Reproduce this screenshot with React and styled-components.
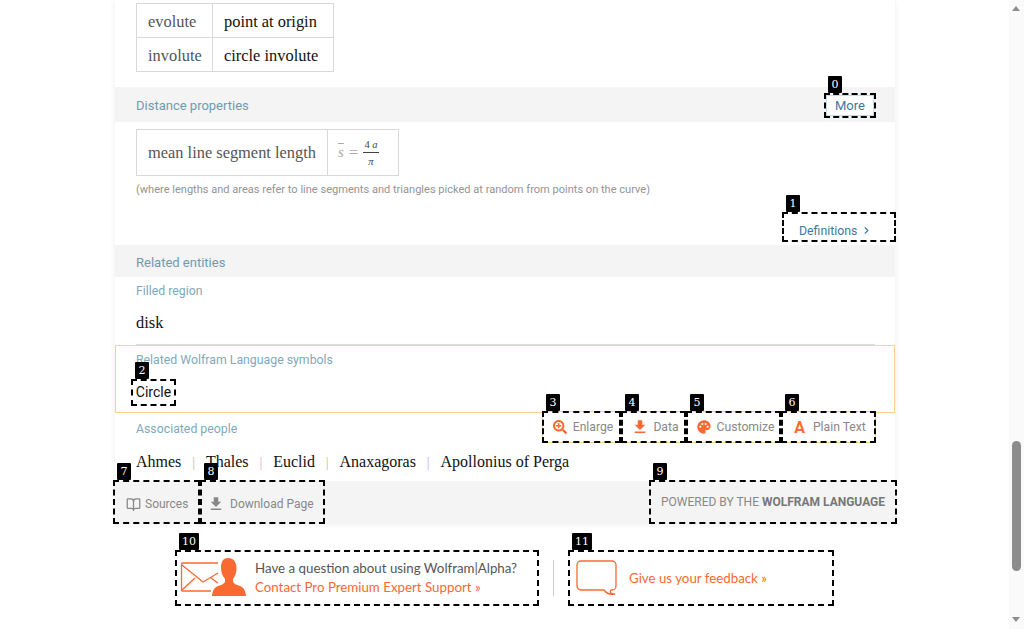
import styled, { createGlobalStyle } from "styled-components";
import { MdFileDownload, MdPalette } from "react-icons/md";
import { FaSearchPlus } from "react-icons/fa";
import { LuBookOpen, LuChevronRight } from "react-icons/lu";

const ORANGE = "#f96932";
const LABEL = "#7fa9bb";
const HEADING = "#6f9bb0";
const LINK = "#3c7a9c";

const people = ["Ahmes", "Thales", "Euclid", "Anaxagoras", "Apollonius of Perga"];

function Marked({ n, children, ...rest }) {
  return (
    <MarkedBox {...rest}>
      <Badge>{n}</Badge>
      {children}
    </MarkedBox>
  );
}

function App() {
  const tools = [
    { n: 3, label: "Enlarge", w: 79, gap: 6, icon: <FaSearchPlus size={14} /> },
    { n: 4, label: "Data", w: 65, gap: 4, icon: <MdFileDownload size={18} /> },
    { n: 5, label: "Customize", w: 95, gap: 5, icon: <MdPalette size={16} /> },
    { n: 6, label: "Plain Text", w: 95, gap: 8, icon: <LetterIcon>A</LetterIcon> },
  ];

  return (
    <>
      <GlobalStyle />
      <Page>
        <Card>
          <TableBlock>
            <DataTable>
              <tbody>
                <tr>
                  <KeyCell>evolute</KeyCell>
                  <ValueCell>point at origin</ValueCell>
                </tr>
                <tr>
                  <KeyCell>involute</KeyCell>
                  <ValueCell>circle involute</ValueCell>
                </tr>
              </tbody>
            </DataTable>
          </TableBlock>

          <SectionHeader>
            <span>Distance properties</span>
            <Marked n={0}>
              <MoreButton>More</MoreButton>
            </Marked>
          </SectionHeader>

          <FormulaBlock>
            <FormulaTable>
              <tbody>
                <tr>
                  <FormulaKey>mean line segment length</FormulaKey>
                  <FormulaValue>
                    <Formula>
                      <SBar>s</SBar>
                      <Equals>=</Equals>
                      <Fraction>
                        <Numerator>
                          4 <i>a</i>
                        </Numerator>
                        <Denominator>π</Denominator>
                      </Fraction>
                    </Formula>
                  </FormulaValue>
                </tr>
              </tbody>
            </FormulaTable>
            <Note>
              (where lengths and areas refer to line segments and triangles picked at random from
              points on the curve)
            </Note>
          </FormulaBlock>

          <DefinitionsRow>
            <DefinitionsBox n={1}>
              Definitions
              <LuChevronRight size={11} strokeWidth={2.5} />
            </DefinitionsBox>
          </DefinitionsRow>

          <SectionHeader $short>
            <span>Related entities</span>
          </SectionHeader>

          <SubSection>
            <SubLabel>Filled region</SubLabel>
            <SerifLine>disk</SerifLine>
          </SubSection>
          <Rule />

          <Highlight>
            <SubLabel>Related Wolfram Language symbols</SubLabel>
            <SymbolBox n={2}>Circle</SymbolBox>
          </Highlight>

          <Toolbar>
            {tools.map((tool) => (
              <ToolButton n={tool.n} key={tool.n} $w={tool.w} $gap={tool.gap}>
                <ToolIcon>{tool.icon}</ToolIcon>
                {tool.label}
              </ToolButton>
            ))}
          </Toolbar>

          <PeopleSection>
            <SubLabel>Associated people</SubLabel>
            <PeopleRow>
              {people.map((name, i) => (
                <Person key={name} $first={i === 0}>
                  {name}
                </Person>
              ))}
            </PeopleRow>
          </PeopleSection>

          <CardFooter>
            <FooterLeft>
              <FooterLink n={7} $w={87} $pad={11} $gap={4}>
                <LuBookOpen size={15} />
                Sources
              </FooterLink>
              <FooterLink n={8} $w={125} $pad={5} $gap={5}>
                <MdFileDownload size={18} />
                Download Page
              </FooterLink>
            </FooterLeft>
            <PoweredBy n={9}>
              POWERED BY THE&nbsp;<b>WOLFRAM LANGUAGE</b>
            </PoweredBy>
          </CardFooter>
        </Card>

        <Support>
          <SupportBox n={10} $w={364} $pad={3} $gap={9}>
            <MailIcon />
            <SupportText>
              <div>Have a question about using Wolfram|Alpha?</div>
              <OrangeLink>Contact Pro Premium Expert Support »</OrangeLink>
            </SupportText>
          </SupportBox>
          <SupportDivider />
          <SupportBox n={11} $w={266} $pad={6} $gap={12}>
            <BubbleIcon />
            <OrangeLink>Give us your feedback »</OrangeLink>
          </SupportBox>
        </Support>
      </Page>
      <ScrollTrack>
        <ScrollArrow $up />
        <ScrollThumb />
        <ScrollArrow />
      </ScrollTrack>
    </>
  );
}

function MailIcon() {
  return (
    <svg width="66" height="40" viewBox="0 0 66 40" fill="none">
      <path d="M38 5H2.5a1 1 0 0 0-1 1v26a1 1 0 0 0 1 1H31" stroke={ORANGE} strokeWidth="1.3" />
      <path d="M2 7l21 17 15-9M2 32l13-12M31 20l7 5" stroke={ORANGE} strokeWidth="1.3" />
      <path
        d="M48 0c5.5 0 8.5 4 8.5 10 0 4-1 8-3.5 11v3c1 2 4 3 7 4 4 1.5 5.5 5 6 10H32c.5-5 2-8.5 6-10 3-1 6-2 7-4v-3c-2.5-3-4-7-4-11C41 4 43 0 48 0z"
        fill={ORANGE}
      />
    </svg>
  );
}

function BubbleIcon() {
  return (
    <svg width="41" height="36" viewBox="0 0 41 36" fill="none">
      <path
        d="M5 1h31a4 4 0 0 1 4 4v21a4 4 0 0 1-4 4h-1c-1 1-1 2 0 3 1 .5 3 1 4 1-4 1-8 0-11-4H5a4 4 0 0 1-4-4V5a4 4 0 0 1 4-4z"
        stroke={ORANGE}
        strokeWidth="1.3"
      />
    </svg>
  );
}

const GlobalStyle = createGlobalStyle`
  html, body {
    margin: 0;
    padding: 0;
    background: #fff;
    overflow: hidden;
  }
  body {
    font-family: "Roboto", sans-serif;
  }
`;

const Page = styled.div`
  width: 1009px;
  height: 629px;
  overflow: hidden;
`;

const Card = styled.div`
  position: relative;
  width: 780px;
  height: 524px;
  margin-left: 115px;
  background: #fff;
  box-shadow: 0 0 6px rgba(0, 0, 0, 0.08);
`;

const MarkedBox = styled.div`
  position: relative;
  box-sizing: border-box;
  border: 2px dashed #000;
`;

const Badge = styled.span`
  position: absolute;
  left: 2px;
  top: -19px;
  box-sizing: border-box;
  min-width: 14px;
  height: 17px;
  padding: 0 3px;
  background: #000;
  color: #fff;
  border-radius: 1px;
  font: 400 11px/17px "DejaVu Serif", serif;
  text-align: center;
  z-index: 3;
`;

const TableBlock = styled.div`
  height: 87px;
  padding: 3px 0 0 21px;
  box-sizing: border-box;
`;

const DataTable = styled.table`
  border-collapse: collapse;
  font: 400 16.4px "Liberation Serif", serif;
`;

const KeyCell = styled.td`
  width: 76px;
  height: 34px;
  padding: 2px 0 0 11px;
  box-sizing: border-box;
  border: 1px solid #d8d8d8;
  color: #555;
`;

const ValueCell = styled.td`
  width: 121px;
  padding: 2px 0 0 11px;
  box-sizing: border-box;
  border: 1px solid #d8d8d8;
  color: #111;
`;

const SectionHeader = styled.div`
  display: flex;
  justify-content: space-between;
  align-items: center;
  box-sizing: border-box;
  height: ${(p) => (p.$short ? 32 : 35)}px;
  padding: 2px 19px 0 21px;
  background: #f4f4f4;
  font-size: 13px;
  color: ${HEADING};
`;

const MoreButton = styled.div`
  box-sizing: border-box;
  width: 48px;
  height: 21px;
  background: #fff;
  border: 1px solid #c4dbe3;
  color: ${LINK};
  font-size: 13px;
  line-height: 19px;
  text-align: center;
`;

const FormulaBlock = styled.div`
  height: 90px;
  padding: 7px 0 0 21px;
  box-sizing: border-box;
`;

const FormulaTable = styled.table`
  border-collapse: collapse;
`;

const FormulaKey = styled.td`
  height: 45px;
  padding: 0 11px;
  border: 1px solid #d8d8d8;
  color: #555;
  font: 400 16.4px "Liberation Serif", serif;
`;

const FormulaValue = styled.td`
  width: 71px;
  padding: 0 0 0 10px;
  box-sizing: border-box;
  border: 1px solid #d8d8d8;
`;

const Formula = styled.div`
  display: flex;
  align-items: center;
  gap: 5px;
  font-family: "Liberation Serif", serif;
  color: #aaa;
`;

const SBar = styled.i`
  font-size: 15px;
  text-decoration: overline;
`;

const Equals = styled.span`
  font-size: 17px;
`;

const Fraction = styled.div`
  display: flex;
  flex-direction: column;
  align-items: center;
  color: #444;
  font-size: 10.5px;
`;

const Numerator = styled.div`
  padding: 0 1px 2px;
  border-bottom: 1px solid #444;
`;

const Denominator = styled.i`
  padding-top: 3px;
`;

const Note = styled.div`
  margin-top: 7px;
  font-size: 11.05px;
  color: #949494;
`;

const DefinitionsRow = styled.div`
  display: flex;
  justify-content: flex-end;
  height: 33px;
`;

const DefinitionsBox = styled(Marked)`
  display: flex;
  align-items: center;
  gap: 4px;
  box-sizing: border-box;
  width: 114px;
  height: 30px;
  margin-right: -1px;
  padding: 7px 0 0 15px;
  color: ${LINK};
  font-size: 12.3px;
`;

const SubSection = styled.div`
  padding: 6px 21px 0;
  height: 67px;
  box-sizing: border-box;
`;

const SubLabel = styled.div`
  font-size: 12.3px;
  line-height: 16px;
  color: ${LABEL};
`;

const SerifLine = styled.div`
  margin-top: 15px;
  font: 400 16.4px/18px "Liberation Serif", serif;
  color: #111;
`;

const Rule = styled.div`
  height: 1px;
  margin: 0 20px 0 21px;
  background: #ddd;
`;

const Highlight = styled.div`
  box-sizing: border-box;
  height: 68px;
  padding: 6px 20px 0;
  border: 1px solid #fbd38a;
`;

const SymbolBox = styled(Marked)`
  width: 45px;
  height: 27px;
  margin: 11px 0 0 -5px;
  box-sizing: border-box;
  font-size: 14px;
  line-height: 23px;
  text-align: center;
  color: #111;
`;

const Toolbar = styled.div`
  position: absolute;
  display: flex;
  left: 427px;
  top: 411px;
  z-index: 2;
  background: #fff;
  box-shadow: inset 0 0 0 1px #fbd38a;
`;

const ToolButton = styled(Marked)`
  display: flex;
  align-items: center;
  justify-content: center;
  gap: ${(p) => p.$gap}px;
  width: ${(p) => p.$w}px;
  height: 32px;
  padding-left: 3px;
  font-size: 12.2px;
  color: #888;
`;

const ToolIcon = styled.span`
  display: flex;
  color: ${ORANGE};
`;

const LetterIcon = styled.b`
  font: 700 16px "Roboto", sans-serif;
  color: ${ORANGE};
`;

const PeopleSection = styled.div`
  box-sizing: border-box;
  height: 68px;
  padding: 8px 21px 0;
`;

const PeopleRow = styled.div`
  display: flex;
  margin-top: 16px;
  font: 400 16px/18px "Liberation Serif", serif;
  color: #111;
`;

const Person = styled.span`
  ${(p) =>
    !p.$first &&
    `
    &::before {
      content: "|";
      margin: 0 10.9px;
      color: #bbb;
      font-size: 14px;
    }
  `}
`;

const CardFooter = styled.div`
  display: flex;
  justify-content: space-between;
  height: 43px;
  background: #f4f4f4;
`;

const FooterLeft = styled.div`
  display: flex;
  margin: -1px 0 0 -2px;
`;

const FooterLink = styled(Marked)`
  display: flex;
  align-items: center;
  gap: ${(p) => p.$gap}px;
  width: ${(p) => p.$w}px;
  height: 44px;
  padding: 4px 0 0 ${(p) => p.$pad}px;
  font-size: 12px;
  color: #888;
`;

const PoweredBy = styled(Marked)`
  box-sizing: border-box;
  display: flex;
  align-items: center;
  justify-content: center;
  width: 248px;
  height: 44px;
  margin: -1px -2px 0 0;
  font-size: 12px;
  color: #888;
  b {
    font-weight: 700;
    color: #777;
  }
`;

const Support = styled.div`
  display: flex;
  align-items: center;
  height: 56px;
  margin: 26px 0 0 175px;
`;

const SupportBox = styled(Marked)`
  display: flex;
  align-items: center;
  gap: ${(p) => p.$gap}px;
  width: ${(p) => p.$w}px;
  height: 56px;
  padding-left: ${(p) => p.$pad}px;
`;

const SupportText = styled.div`
  font: 400 13.3px/19px "Lato", sans-serif;
  color: #555;
`;

const OrangeLink = styled.div`
  font: 400 13.3px/19px "Lato", sans-serif;
  color: ${ORANGE};
`;

const SupportDivider = styled.div`
  width: 1px;
  height: 36px;
  margin: 0 14px;
  background: #ccc;
`;

const ScrollTrack = styled.div`
  position: fixed;
  top: 0;
  right: 0;
  width: 15px;
  height: 629px;
  background: #fafafa;
`;

const ScrollThumb = styled.div`
  position: absolute;
  top: 441px;
  left: 3px;
  width: 9px;
  height: 130px;
  border-radius: 5px;
  background: #8c8c8c;
`;

const ScrollArrow = styled.div`
  position: absolute;
  left: 3px;
  top: ${(p) => (p.$up ? 6 : 617)}px;
  border-left: 4.5px solid transparent;
  border-right: 4.5px solid transparent;
  border-${(p) => (p.$up ? "bottom" : "top")}: 5px solid #8c8c8c;
`;

export default App;
